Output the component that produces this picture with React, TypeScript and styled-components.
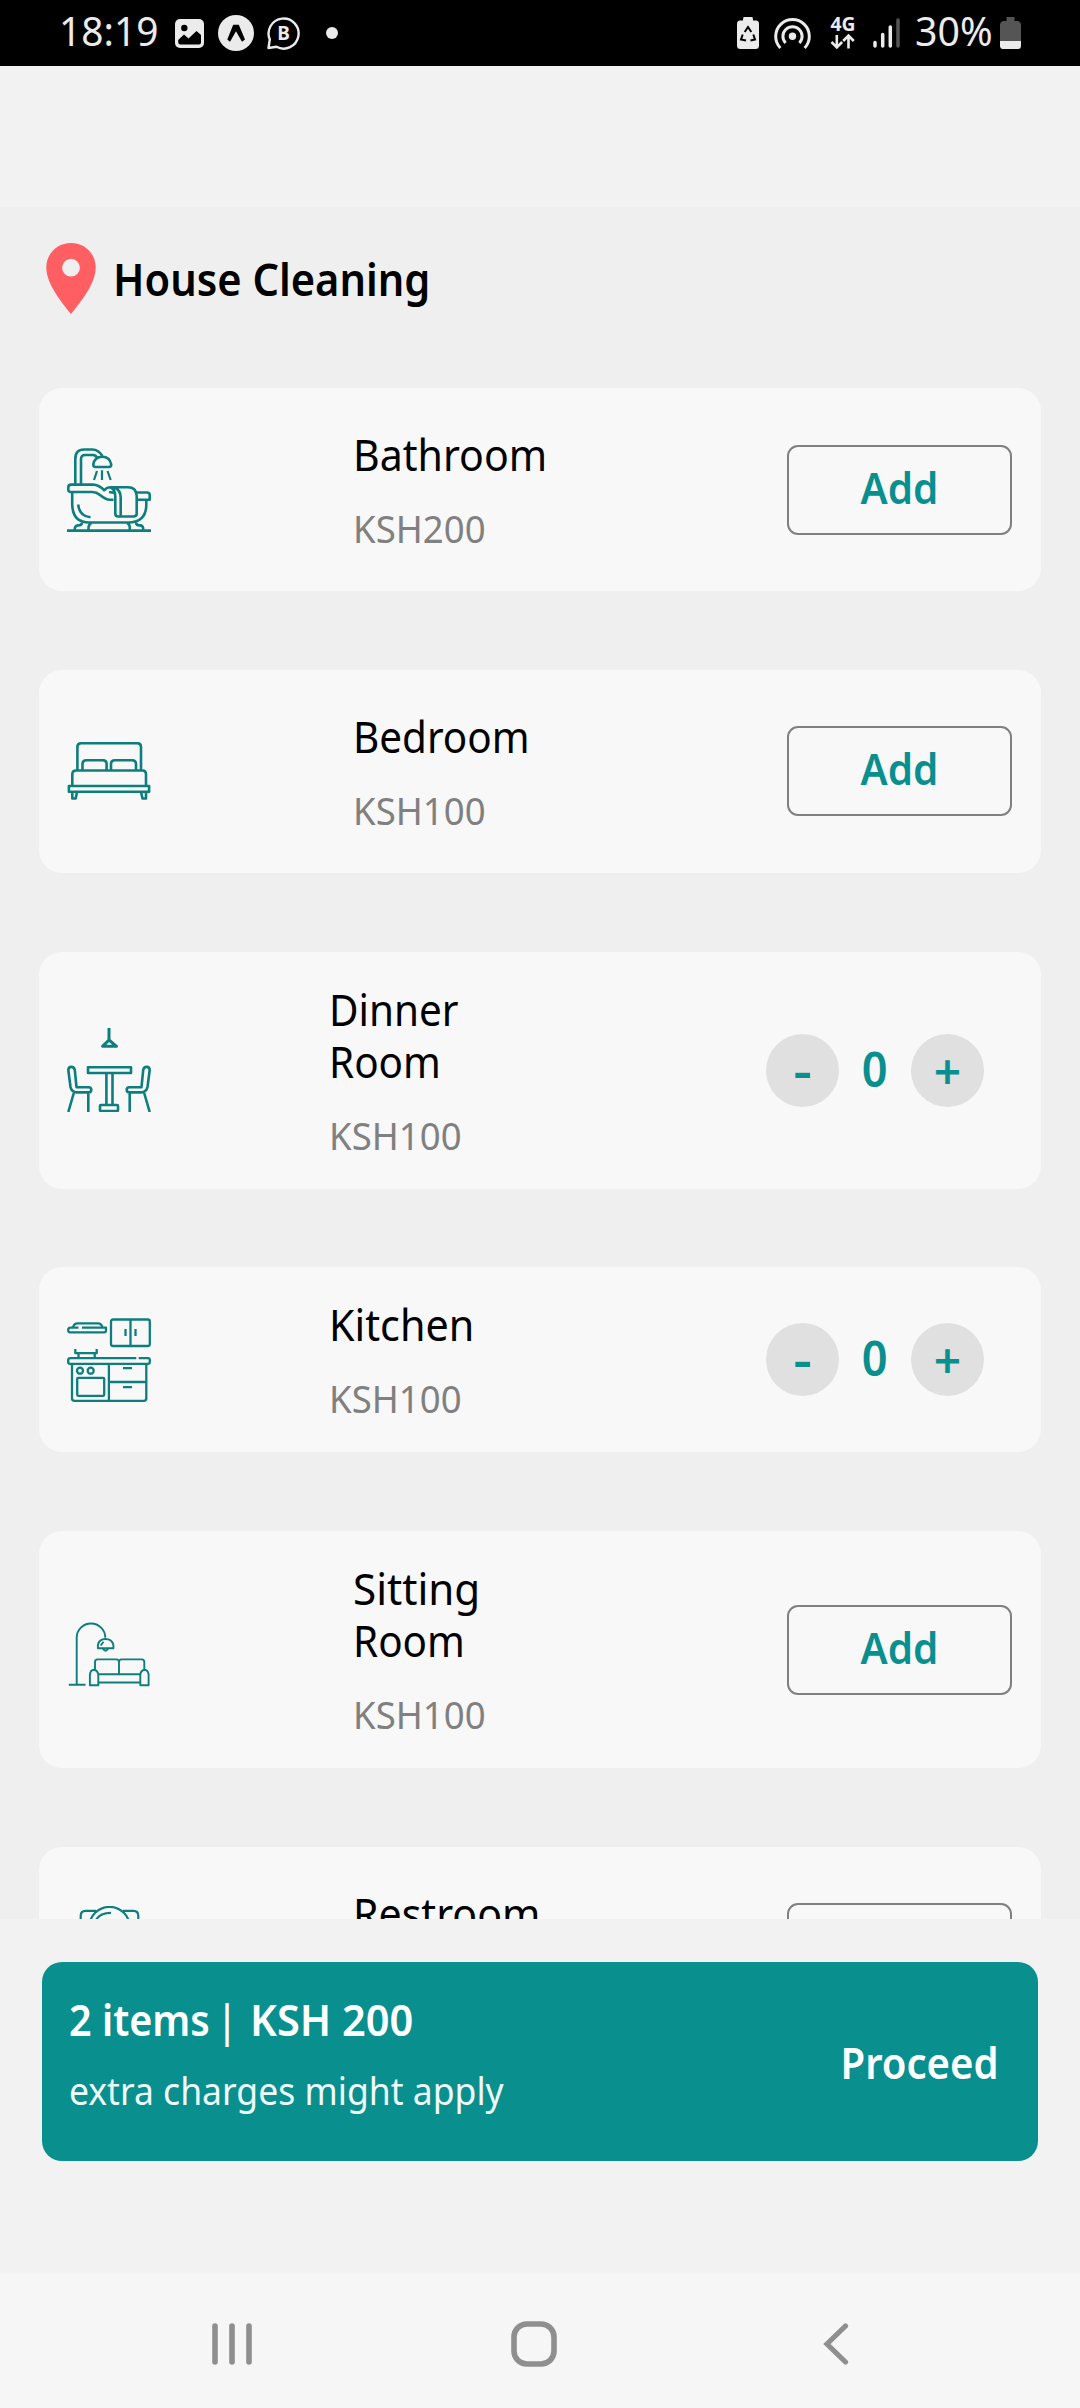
import React from "react";
import styled, { createGlobalStyle } from "styled-components";

const TEAL = "#0a8f8f";
const ICON_TEAL = "#0d7d7d";
const LIGHT = "#ebebeb";

const GlobalStyle = createGlobalStyle`
  * { box-sizing: border-box; }
  body {
    margin: 0;
    background: #f2f2f2;
    font-family: "Noto Sans", "Open Sans", sans-serif;
  }
  button { font-family: inherit; padding: 0; border: 0; background: none; }
  svg { display: block; flex: none; }
`;

const Screen = styled.div`
  display: flex;
  flex-direction: column;
  width: 1080px;
  height: 2408px;
  overflow: hidden;
  background: #f2f2f2;
`;

/* Slightly condensed text, anchored on the side it is aligned to. */
const Condensed = styled.span<{ $squeeze: number; $anchor?: string }>`
  display: inline-block;
  white-space: pre;
  transform: scaleX(${(p) => p.$squeeze});
  transform-origin: ${(p) => p.$anchor ?? "left"} center;
`;

const StatusBar = styled.header`
  display: flex;
  align-items: center;
  justify-content: space-between;
  height: 66px;
  flex: none;
  padding: 0 59px 0 59px;
  background: #000;
  color: ${LIGHT};
`;

const StatusGroup = styled.div`
  display: flex;
  align-items: center;
  height: 100%;
`;

const StatusText = styled.div<{ $width: number; $gap?: number }>`
  width: ${(p) => p.$width}px;
  margin-left: ${(p) => p.$gap ?? 0}px;
  margin-bottom: 5px;
  font-size: 40.5px;
  line-height: 60px;
`;

const StatusIcon = styled.div<{ $gap: number }>`
  margin-left: ${(p) => p.$gap}px;
`;

const TopSpace = styled.div`
  height: 141px;
  flex: none;
`;

const ScrollArea = styled.main`
  height: 1712px;
  flex: none;
  overflow: hidden;
  background: #efefef;
`;

const Heading = styled.div`
  display: flex;
  align-items: center;
  gap: 17px;
  height: 181.1px;
  padding: 36px 0 74px 46px;
`;

const Title = styled.h1`
  margin: 0;
  font-size: 45px;
  font-weight: 600;
  line-height: 60px;
  color: #000;
`;

const List = styled.div`
  display: flex;
  flex-direction: column;
  gap: 78.9px;
  padding: 0 39px;
`;

const Card = styled.article`
  display: flex;
  align-items: center;
  justify-content: space-between;
  flex: none;
  padding: 0 29px 0 28px;
  border-radius: 23px;
  background: #f8f8f8;
`;

const Details = styled.div`
  display: flex;
  flex-direction: column;
  gap: 25px;
  width: 232px;
  padding: 31.95px 0 30.95px;
`;

const Name = styled.div`
  font-size: 43px;
  line-height: 52px;
  color: #000;
`;

const Price = styled.div`
  font-size: 37.5px;
  line-height: 45px;
  color: #808080;
`;

const AddButton = styled.button`
  width: 225px;
  height: 90px;
  margin: 56.45px 0;
  border: 2px solid #808080;
  border-radius: 11px;
  color: ${TEAL};
  font-size: 43px;
  font-weight: 600;
  line-height: 82px;
  padding-bottom: 4px;
`;

const Stepper = styled.div`
  display: flex;
  align-items: center;
  justify-content: space-between;
  width: 218px;
  height: 73px;
  margin: 0 28px;
`;

const RoundButton = styled.button`
  display: flex;
  align-items: center;
  justify-content: center;
  width: 73px;
  height: 73px;
  border-radius: 50%;
  background: #e0e0e0;
  color: ${TEAL};
  font-size: 48px;
  font-weight: 600;
  line-height: 73px;
`;

const Count = styled.div`
  color: ${TEAL};
  font-size: 48px;
  font-weight: 600;
  line-height: 73px;
  margin-top: -4px;
`;

const Footer = styled.footer`
  flex: none;
  height: 354px;
  padding: 43px 42px 0;
`;

const Summary = styled.div`
  display: flex;
  align-items: center;
  justify-content: space-between;
  height: 199px;
  padding: 0 39px 0 27px;
  border-radius: 20px;
  background: ${TEAL};
  color: #fff;
`;

const SummaryTexts = styled.div`
  display: flex;
  flex-direction: column;
  align-self: flex-start;
  gap: 18px;
  margin-top: 29px;
`;

const SummaryTotal = styled.div`
  display: grid;
  grid-template-columns: 146px 35px auto;
  font-size: 43.5px;
  font-weight: 600;
  line-height: 56px;
`;

const Divider = styled.span`
  font-weight: 400;
`;

const SummaryNote = styled.div`
  font-size: 38px;
  line-height: 50px;
  color: #eefafa;
`;

const Proceed = styled.button`
  margin-top: 2px;
  color: #fff;
  font-size: 43px;
  font-weight: 600;
  line-height: 60px;
`;

const NavBar = styled.nav`
  display: grid;
  grid-template-columns: repeat(3, 302px);
  justify-items: center;
  align-items: center;
  height: 135px;
  flex: none;
  padding: 6px 0 0 81px;
  background: #f6f6f6;
`;

const lineProps = {
  width: 84,
  height: 84,
  viewBox: "0 0 84 84",
  fill: "none",
  stroke: ICON_TEAL,
  strokeWidth: 2.6,
  strokeLinejoin: "round" as const,
};

const BathIcon = () => (
  <svg {...lineProps}>
    <path d="M8.3 36V11Q8.3 1.5 17 1.5H25.5Q31 1.5 35.5 8" />
    <path d="M14 36V11.5Q14 7 18 7H26Q29 7.3 30.5 10" />
    <path d="M26.3 16.5Q27.5 8.7 35.2 8.7T44.2 16.5Q44.2 19 42 19H28.5Q26.3 19 26.3 16.5Z" />
    <path d="M30 23L27 32M35 22.3V32M40.5 23L43.7 32" strokeWidth="2.2" />
    <path d="M46.5 51.8H43Q38.5 51.5 33 47Q29.5 44 25.5 44H4Q1.3 44 1.3 41.5V39.5Q1.3 36.6 4 36.6H26Q32 36.6 38 43" />
    <path d="M37.5 42.3Q39.5 39.3 43.5 39.3Q48.3 41.5 48.3 49V65.5Q48.3 68.5 51.3 68.5H66.5Q69.7 68.5 69.7 65.5V47.5Q69 39.3 61 39.3H42.5M47.5 39.5Q53.7 42 53.7 50V68M42 44Q45 44.5 47.5 44.8" />
    <path d="M69.5 44.5H80Q82.7 44.5 82.7 47V51.8H70" />
    <path d="M5.2 44V56Q5.5 74.5 22 74.5H63Q79 73.5 79.3 57V52" />
    <path d="M11.3 56.5Q12 68 23.5 69.3" />
    <path d="M15 74.5Q15 77.4 11 77.4Q7.7 77.4 7.7 82M24.5 75Q21 76.5 21.5 82M69 74.5Q69 77.4 73 77.4Q76.3 77.4 76.3 82M60 75Q63.5 76.5 62.7 82M0 82.6H84" />
  </svg>
);

const BedIcon = () => (
  <svg {...lineProps}>
    <path d="M10.4 41.5V18Q10.4 14.2 14 14.2H70.5Q74 14.2 74 18V41.5" />
    <path d="M15.5 41.5V35Q15.5 31.2 19.5 31.2H36Q39.6 31.2 39.6 35V41.5M44 41.5V35Q44 31.2 48 31.2H65Q69 31.2 69 35V41.5" />
    <path d="M5.3 57V45.5Q5.3 41.5 9 41.5H75.5Q79 41.5 79 45.5V57" />
    <rect x="1.9" y="57" width="80.2" height="5.7" />
    <path d="M5.3 63V69.5H8.7L10 63M79 63V69.5H75.5L74 63" />
  </svg>
);

const chair = (
  <path d="M1.3 42Q1.5 38.9 4.3 38.9T7.8 42L9.5 59.2H21.5Q24.3 59.2 24.3 61.8T21.5 64.4H9.5Q4.5 63.8 3.5 59ZM6.8 65L1.3 84M21.3 65V84" />
);

const DiningIcon = () => (
  <svg {...lineProps}>
    <path d="M42 0V11.5M42 12L35.5 18.3H49.5Z" strokeWidth="3" />
    <rect x="21" y="39.2" width="43" height="5.8" />
    <path d="M39.4 45.5V76.5M45.5 45.5V76.5" />
    <rect x="33" y="77" width="18" height="6" rx="1" />
    {chair}
    <g transform="translate(84 0) scale(-1 1)">{chair}</g>
  </svg>
);

const KitchenIcon = () => (
  <svg {...lineProps} strokeWidth={2.3}>
    <path d="M6 9.5Q7 5.3 10.5 5.3H31Q34.5 5.3 35.5 9.5M11.5 9.6H3.5Q1.2 9.6 1.2 12T3 14.3H37Q39 14.3 39 12.5V9.6H15" />
    <rect x="44" y="1.5" width="38.8" height="26.5" rx="2" />
    <path d="M63.5 1.5V28M58.5 11V18M68.5 11V18M8.3 31V35.2H29.7V31M11.5 35.5V39.5M27.7 35.5V39.5" />
    <path d="M69.3 40.2H3.5Q1.2 40.2 1.2 42V44Q1.2 45.8 3 45.8H81Q82.8 45.8 82.8 44V42Q82.8 40.2 81 40.2H71.7" />
    <path d="M5 46V80.5Q5 82.8 7.5 82.8H77Q79.3 82.8 79.3 80.5V46M41.9 46V83M42 64H79M56 50.2H65M56 69.2H65" />
    <circle cx="13" cy="52.7" r="3" />
    <circle cx="23.7" cy="52.7" r="3" />
    <rect x="10.2" y="59.8" width="27" height="18" rx="1" />
  </svg>
);

const SofaIcon = () => (
  <svg {...lineProps} strokeWidth={1.9}>
    <path d="M9.7 76.5V29.8A14.3 14.3 0 0 1 38.3 29.8M1.8 76.7H18.5" />
    <path d="M30.9 40.3V37Q32 31 38.5 31T46.4 37V40.3ZM36 41Q38.5 44.5 41 41M33.7 37.5L36.5 33.7" />
    <path d="M28 61.5V54Q28 51.4 30.5 51.4H49.5Q52 51.4 52 54V66M52 54Q52 51.4 54.5 51.4H74.8Q77.3 51.4 77.3 54V61.5M31.5 66.3H73.5M31.5 74.5H73.5" />
    <path d="M22.9 77V66.5Q23.5 62 27 61.7Q31 62.5 31.3 67V77.2H22.9ZM81.6 77V66.5Q81 62 77.5 61.7Q73.5 62.5 73.3 67V77.2H81.6Z" />
  </svg>
);

const RestroomIcon = () => (
  <svg {...lineProps} strokeWidth={2.2}>
    <path d="M13.7 84V10Q13.7 4.8 18.5 4.8H29M71.3 84V10Q71.3 4.8 66.5 4.8H56" />
    <circle cx="42.5" cy="21.2" r="20.3" />
    <path d="M29 14Q33 6.8 44 6.8" />
  </svg>
);

const PinIcon = () => (
  <svg width="50" height="71" viewBox="0 0 50 71">
    <path
      fill="#ff5f63"
      fillRule="evenodd"
      d="M25 0C11 0 .3 10.8 .3 24.5C.3 40 14 57.5 25 71C36 57.5 49.7 40 49.7 24.5C49.7 10.8 39 0 25 0ZM25 15.8A8.9 8.9 0 1 1 25 33.6A8.9 8.9 0 1 1 25 15.8Z"
    />
  </svg>
);

const GalleryIcon = () => (
  <svg width="29" height="29" viewBox="0 0 29 29">
    <rect width="29" height="29" rx="5" fill={LIGHT} />
    <circle cx="9.3" cy="9" r="3.2" fill="#000" />
    <path d="M3.2 21L9 15.5L13.5 19.5L21.5 12L26 16V23.5Q26 25.500 24 25.5H5.5Q3.2 25.5 3.2 23Z" fill="#000" />
  </svg>
);

const ExpoIcon = () => (
  <svg width="36" height="36" viewBox="0 0 36 36">
    <circle cx="18" cy="18" r="18" fill={LIGHT} />
    <path d="M15.2 9.8H20.8L27 24.5L24 26.8L18 16.2L12 26.8L9.3 24.5Z" fill="#000" />
  </svg>
);

const ChatIcon = () => (
  <svg width="33" height="34" viewBox="0 0 33 34">
    <path d="M1.5 32L2.8 23.5A15 15 0 1 1 9.5 30.8Z" fill="none" stroke={LIGHT} strokeWidth="2.4" strokeLinejoin="round" />
    <text x="16.6" y="23.5" textAnchor="middle" fontSize="19" fontWeight="700" fill={LIGHT}>B</text>
  </svg>
);

const DotIcon = () => (
  <svg width="12" height="12" viewBox="0 0 12 12"><circle cx="6" cy="6" r="6" fill={LIGHT} /></svg>
);

const SaverIcon = () => (
  <svg width="22" height="32" viewBox="0 0 22 32">
    <path d="M7 0H15Q16 0 16 3.5H19Q22 3.5 22 7V28.5Q22 32 18.5 32H3.5Q0 32 0 28.5V7Q0 3.5 3 3.5H6Q6 0 7 0Z" fill={LIGHT} />
    <path d="M7.7 15L11 10L14.3 15M16.3 17.500L18 22.5L13.5 23.5M9 23.5L4 22.5L5.7 17.5" fill="none" stroke="#000" strokeWidth="2" />
  </svg>
);

const HotspotIcon = () => (
  <svg width="37" height="33" viewBox="0 0 37 33" fill="none" stroke={LIGHT} strokeWidth="3">
    <path d="M6.4 31A16.8 16.8 0 1 1 30.6 31" />
    <path d="M11.6 26A9.6 9.6 0 1 1 25.4 26" />
    <circle cx="18.5" cy="19.3" r="3.7" fill={LIGHT} stroke="none" />
  </svg>
);

const NetworkIcon = () => (
  <svg width="26" height="34" viewBox="0 0 26 34" fill={LIGHT}>
    <text x="13" y="14.5" textAnchor="middle" fontSize="20" fontWeight="700" textLength="25" lengthAdjust="spacingAndGlyphs">4G</text>
    <path d="M6.8 19V31M1.5 26L6.8 31.5L12.1 26M18.5 32.5V20M13.2 25L18.5 19.5L23.8 25" fill="none" stroke={LIGHT} strokeWidth="2.6" />
  </svg>
);

const SignalIcon = () => (
  <svg width="27" height="30" viewBox="0 0 27 30" strokeWidth="3.5" strokeLinecap="round" stroke={LIGHT}>
    <path d="M2 24.5V28M9.7 16.5V28M17.3 9V28" />
    <path d="M25 2V28" stroke="#555" />
  </svg>
);

const BatteryIcon = () => (
  <svg width="21" height="32" viewBox="0 0 21 32">
    <path d="M6.5 0H14.5V4H18Q21 5 21 8V24H0V8Q0 5 3 4H6.5Z" fill="#555" />
    <path d="M0 24H21V28.5Q21 32 18 32H3Q0 32 0 28.5Z" fill={LIGHT} />
  </svg>
);

type Item = {
  name: { text: string; squeeze: number }[];
  price: string;
  icon: React.ReactNode;
  count?: number;
};

const items: Item[] = [
  { name: [{ text: "Bathroom", squeeze: 0.955 }], price: "KSH200", icon: <BathIcon /> },
  { name: [{ text: "Bedroom", squeeze: 0.94 }], price: "KSH100", icon: <BedIcon /> },
  {
    name: [{ text: "Dinner", squeeze: 0.94 }, { text: "Room", squeeze: 0.94 }],
    price: "KSH100",
    icon: <DiningIcon />,
    count: 0,
  },
  { name: [{ text: "Kitchen", squeeze: 0.96 }], price: "KSH100", icon: <KitchenIcon />, count: 0 },
  {
    name: [{ text: "Sitting", squeeze: 0.98 }, { text: "Room", squeeze: 0.94 }],
    price: "KSH100",
    icon: <SofaIcon />,
  },
  { name: [{ text: "Restroom", squeeze: 0.955 }], price: "KSH100", icon: <RestroomIcon /> },
];

const ItemCard = ({ item }: { item: Item }) => (
  <Card>
    {item.icon}
    <Details>
      <div>
        {item.name.map((line) => (
          <Name key={line.text}>
            <Condensed $squeeze={line.squeeze}>{line.text}</Condensed>
          </Name>
        ))}
      </div>
      <Price>
        <Condensed $squeeze={0.975}>{item.price}</Condensed>
      </Price>
    </Details>
    {item.count === undefined ? (
      <AddButton>
        <Condensed $squeeze={0.94} $anchor="center">Add</Condensed>
      </AddButton>
    ) : (
      <Stepper>
        <RoundButton>
          <Condensed $squeeze={1.2} $anchor="center">-</Condensed>
        </RoundButton>
        <Count>
          <Condensed $squeeze={0.94} $anchor="center">{item.count}</Condensed>
        </Count>
        <RoundButton>+</RoundButton>
      </Stepper>
    )}
  </Card>
);

export default function App() {
  return (
    <Screen>
      <GlobalStyle />
      <StatusBar>
        <StatusGroup>
          <StatusText $width={102}>
            <Condensed $squeeze={0.96}>18:19</Condensed>
          </StatusText>
          <StatusIcon $gap={14}><GalleryIcon /></StatusIcon>
          <StatusIcon $gap={14}><ExpoIcon /></StatusIcon>
          <StatusIcon $gap={13}><ChatIcon /></StatusIcon>
          <StatusIcon $gap={26}><DotIcon /></StatusIcon>
        </StatusGroup>
        <StatusGroup>
          <StatusIcon $gap={0}><SaverIcon /></StatusIcon>
          <StatusIcon $gap={15.5}><HotspotIcon /></StatusIcon>
          <StatusIcon $gap={19}><NetworkIcon /></StatusIcon>
          <StatusIcon $gap={17}><SignalIcon /></StatusIcon>
          <StatusText $width={79} $gap={15}>
            <Condensed $squeeze={0.97}>30%</Condensed>
          </StatusText>
          <StatusIcon $gap={6}><BatteryIcon /></StatusIcon>
        </StatusGroup>
      </StatusBar>
      <TopSpace />
      <ScrollArea>
        <Heading>
          <PinIcon />
          <Title>
            <Condensed $squeeze={0.925}>House Cleaning</Condensed>
          </Title>
        </Heading>
        <List>
          {items.map((item) => (
            <ItemCard key={item.name.map((line) => line.text).join(" ")} item={item} />
          ))}
        </List>
      </ScrollArea>
      <Footer>
        <Summary>
          <SummaryTexts>
            <SummaryTotal>
              <Condensed $squeeze={0.91}>2 items</Condensed>
              <Divider>|</Divider>
              <Condensed $squeeze={0.955}>KSH 200</Condensed>
            </SummaryTotal>
            <SummaryNote>
              <Condensed $squeeze={0.935}>extra charges might apply</Condensed>
            </SummaryNote>
          </SummaryTexts>
          <Proceed>
            <Condensed $squeeze={0.932} $anchor="right">Proceed</Condensed>
          </Proceed>
        </Summary>
      </Footer>
      <NavBar>
        <svg width="40" height="42" viewBox="0 0 40 42" stroke="#8f8f8f" strokeWidth="5.6" strokeLinecap="round">
          <path d="M3 3V39M20 3V39M37 3V39" />
        </svg>
        <svg width="46" height="46" viewBox="0 0 46 46" fill="none" stroke="#8f8f8f" strokeWidth="5.6">
          <rect x="3" y="3" width="40" height="40" rx="13" />
        </svg>
        <svg width="26" height="42" viewBox="0 0 26 42" fill="none" stroke="#8f8f8f" strokeWidth="5.2" strokeLinecap="round">
          <path d="M22.5 3L4 21L22.5 39" />
        </svg>
      </NavBar>
    </Screen>
  );
}
